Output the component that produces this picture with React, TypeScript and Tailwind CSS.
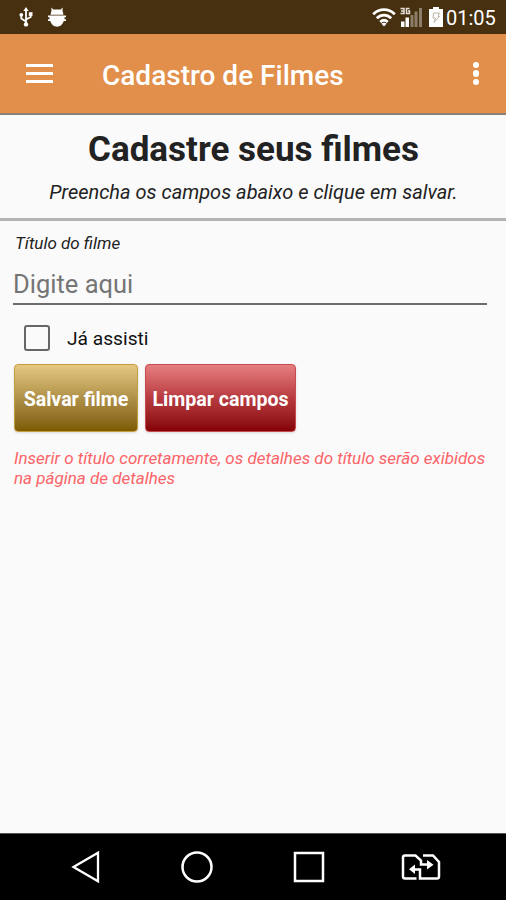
import { useState } from 'react'

function StatusBar() {
  return (
    <div className="flex h-[34px] items-center bg-[#46300f] pl-[19px] pr-[9px] text-white">
      <svg width="14" height="20" viewBox="0 0 14 20" fill="none" stroke="#fff" strokeWidth="1.8">
        <path d="M7 3v14M7 14.500 2.300 11.500V8M7 12.500l4.700-2.500V6.500" />
        <path d="M7 0l2.600 4H4.400z" fill="#fff" stroke="none" />
        <circle cx="7" cy="17.400" r="2.200" fill="#fff" stroke="none" />
        <circle cx="2.300" cy="7.800" r="1.900" fill="#fff" stroke="none" />
        <path d="M9.800 5.200h3.700v3.700H9.800z" fill="#fff" stroke="none" />
      </svg>
      <svg className="ml-[14px]" width="20" height="20" viewBox="0 0 20 20" fill="#fff">
        <path d="M4.300 0.500 6.300 2.500h7.400L15.700 0.500 15.500 3.500 16.500 7.700H3.500L4.500 3.500z" />
        <path d="M1 8.500h18v1.700h-1.500v2H19v1.800h-2.200C15.700 17.500 13.200 19.700 10 19.700S4.300 17.500 3.200 14H1v-1.800h1.500v-2H1z" />
      </svg>
      <div className="ml-auto flex items-center">
        <svg width="24" height="20" viewBox="0 0 24 20" fill="none" stroke="#fff" strokeWidth="2.700">
          <path d="M1.200 7.200C7.500 1.100 16.500 1.100 22.800 7.200" />
          <path d="M4.800 11.200c4.300-4.100 10.100-4.100 14.400 0" />
          <path d="M8.200 15c2.300-2.100 5.300-2.100 7.600 0" />
          <path d="M12 19.500 9.300 16.600c1.500-1.200 3.900-1.200 5.400 0z" fill="#fff" stroke="none" />
        </svg>
        <svg className="ml-[4px]" width="23" height="20" viewBox="0 0 23 20">
          <path d="M1 14.500h3.500V20H1zM5.500 10.500H9V20H5.500z" fill="#fff" />
          <path d="M10.500 8h3v12h-3zM14.500 4.500h3V20h-3zM19 1h3v19h-3z" fill="#8d7e69" />
          <path d="M0.500 1.500h3.500v5H0.500M1 4H4M9.500 1.500H6.500v5h3V4H8" fill="none" stroke="#e5dfd8" strokeWidth="1.500" />
        </svg>
        <svg className="ml-[6px]" width="14" height="20" viewBox="0 0 14 20">
          <path d="M4 0h6v2h4v18H0V2h4z" fill="#fff" />
          <path d="M4.500 6h6L9 9.500h1.500L5 15.500 6.500 11H4z" fill="none" stroke="#bcb2a6" />
        </svg>
        <span className="ml-[3px] w-[51px] whitespace-nowrap pt-[2px] text-[20px] leading-8">01:05</span>
      </div>
    </div>
  )
}

function AppBar() {
  return (
    <div className="flex h-[81px] items-center border-b-2 border-[#8a8078] bg-[#e18f4a] text-white">
      <button className="ml-[26px] flex w-[27px] flex-col gap-[4.500px]" aria-label="Menu">
        <span className="h-[3.500px] w-full bg-white" />
        <span className="h-[3.500px] w-full bg-white" />
        <span className="h-[3.500px] w-full bg-white" />
      </button>
      <h1 className="ml-[49px] whitespace-nowrap pt-[5px] text-[28px] font-medium leading-8">Cadastro de Filmes</h1>
      <button className="ml-auto mr-[27px] flex flex-col gap-[2px]" aria-label="Mais">
        <span className="size-[6.500px] rounded-full bg-white" />
        <span className="size-[6.500px] rounded-full bg-white" />
        <span className="size-[6.500px] rounded-full bg-white" />
      </button>
    </div>
  )
}

function NavBar() {
  return (
    <div className="flex h-[67px] items-center border-t border-[#555] bg-black">
      <svg className="ml-[71px]" width="30" height="34" viewBox="0 0 30 34" fill="none" stroke="#fff" strokeWidth="2.300">
        <path d="M2.500 17 27 2.800v28.400z" />
      </svg>
      <svg className="ml-[79px]" width="34" height="34" viewBox="0 0 34 34" fill="none" stroke="#fff" strokeWidth="2.500">
        <circle cx="17" cy="17" r="14.500" />
      </svg>
      <svg className="ml-[78px]" width="34" height="34" viewBox="0 0 34 34" fill="none" stroke="#fff" strokeWidth="2.500">
        <path d="M3 3h28v28H3z" />
      </svg>
      <svg className="ml-[74px]" width="42" height="34" viewBox="0 0 42 34" fill="none" stroke="#fff" strokeWidth="2.500">
        <path d="M16.500 28.500H5Q3 28.500 3 26.500V7.500Q3 5.500 5 5.500h10.500l5.500 5v4H29" />
        <path d="M23 5.500h10l6 6.500V26.500q0 2-2 2H20V19.500H12.500" />
        <path d="M27 10v9.500l6.500-4.750zM15 14.500V24L9 19.250z" fill="#fff" stroke="none" />
      </svg>
    </div>
  )
}

export default function App() {
  const [title, setTitle] = useState('')
  const [watched, setWatched] = useState(false)

  const clear = () => {
    setTitle('')
    setWatched(false)
  }

  return (
    <div className="flex h-[900px] w-[506px] flex-col overflow-hidden bg-[#fafafa] font-[Roboto,sans-serif] text-[#222]">
      <StatusBar />
      <AppBar />
      <div className="h-[106px] border-b-[3px] border-[#b3b5b4] text-center">
        <h2 className="whitespace-nowrap pl-px pt-[14px] text-[35px] font-bold leading-[42px]">Cadastre seus filmes</h2>
        <p className="whitespace-nowrap pl-px pt-[9px] text-[20px] italic leading-6">Preencha os campos abaixo e clique em salvar.</p>
      </div>
      <main className="flex-1 pl-[14px] pr-[18px]">
        <label htmlFor="titulo" className="block pl-px pt-[12px] text-[17px] italic leading-5">Título do filme</label>
        <input
          id="titulo"
          className="mt-[12px] block h-[40px] w-[474px] -translate-x-px border-b-2 border-[#6b6b6b] bg-transparent text-[25.500px] outline-none placeholder:text-[#757575]"
          placeholder="Digite aqui"
          value={title}
          onChange={(e) => setTitle(e.target.value)}
        />
        <label className="ml-[10px] mt-[20px] flex h-[26px] items-center text-[19.200px] leading-6 text-[#111]">
          <input
            type="checkbox"
            className="size-[26px] appearance-none rounded-[3px] border-[2.500px] border-[#666] checked:bg-[#666]"
            checked={watched}
            onChange={(e) => setWatched(e.target.checked)}
          />
          <span className="ml-[17px] whitespace-nowrap pt-px">Já assisti</span>
        </label>
        <div className="mt-[13px] flex gap-[7px] text-[19.600px] font-bold text-white">
          <button className="h-[68px] w-[124px] whitespace-nowrap rounded-[4px] border border-[#c69d3d] bg-linear-to-b from-[#e6c981] to-[#7c5c00] pt-[3px] shadow-sm">Salvar filme</button>
          <button className="h-[68px] w-[151px] whitespace-nowrap rounded-[4px] border border-[#c64b51] bg-linear-to-b from-[#e67d80] via-[#b83a40] to-[#850005] pt-[3px] shadow-sm" onClick={clear}>Limpar campos</button>
        </div>
        <p className="whitespace-nowrap pt-[16px] text-[17px] italic leading-[20px] text-[#fa6468]">
          Inserir o título corretamente, os detalhes do título serão exibidos
          <br />
          na página de detalhes
        </p>
      </main>
      <NavBar />
    </div>
  )
}
